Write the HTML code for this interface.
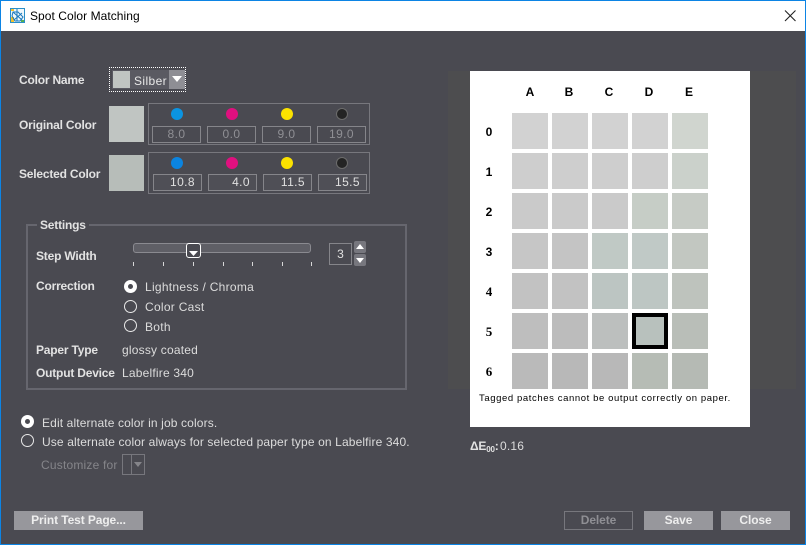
<!DOCTYPE html>
<html><head><meta charset="utf-8"><style>
html,body{margin:0;padding:0;width:806px;height:545px;overflow:hidden;background:#4a4a51}
*{box-sizing:border-box}
div,span,svg{position:absolute}
#r{left:0;top:0;width:806px;height:545px;background:#4a4a51;font:12px/14px "Liberation Sans",sans-serif;color:#dcdcdc;overflow:hidden}
.t{white-space:nowrap;letter-spacing:.2px}
.b{font-weight:bold;color:#e2e2e2;letter-spacing:-.2px;white-space:nowrap}
.f{border:1px solid #85858a;height:17px;width:49px;text-align:center;line-height:15px;color:#8f8f94;letter-spacing:.4px}
.s{border:1px solid #85858a;height:17px;width:49px;text-align:right;padding-right:6px;line-height:15px;color:#e0e0e0;background:#4f4f56;letter-spacing:.4px}
.c{width:12px;height:12px;border-radius:50%}
.g{border:1px solid #77777d}
.p{width:36px;height:36px}
.h{font-weight:bold;color:#000;white-space:nowrap;width:20px;text-align:center}
.o{width:13px;height:13px;border-radius:50%;border:1.5px solid #e8e8e8}
.o.on{background:#fff;border:none}
.o.on:after{content:"";position:absolute;left:4px;top:4px;width:5px;height:5px;border-radius:50%;background:#4a4a51}
.tk{width:1px;height:4px;background:#d8d8d8;top:262px}
.btn{height:19px;top:511px;background:#97979c;color:#eee;font-weight:bold;text-align:center;line-height:19px;white-space:nowrap;letter-spacing:-.1px}
</style></head><body><div id="r">
<div style="left:0;top:0;width:806px;height:31px;background:#fff"></div>
<div style="left:0;top:0;width:806px;height:1px;background:#0c84e4"></div>
<div style="left:0;top:0;width:1px;height:545px;background:#0c84e4"></div>
<div style="left:805px;top:0;width:1px;height:545px;background:#0c84e4"></div>
<div style="left:0;top:544px;width:806px;height:1px;background:#0c84e4"></div>
<svg style="left:10px;top:8px" width="15" height="15" viewBox="0 0 15 15"><rect x=".5" y=".5" width="14" height="14" fill="#eef7fb" stroke="#2a8fc8"/><rect x="1" y="1" width="3" height="2" fill="#f2c230"/><rect x="1" y="9" width="3" height="5" fill="#f2c230"/><rect x="11" y="12" width="3" height="2" fill="#58b050"/><path d="M3 4h5l5 5-3 4H5L2 8zM7 1v12M3 4l9 8M12 5 4 12" fill="none" stroke="#1a78bc" stroke-width="1"/></svg>
<div style="left:30px;top:9px;color:#000;font-size:12px;white-space:nowrap;letter-spacing:.05px">Spot Color Matching</div>
<svg style="left:784px;top:9px" width="13" height="13" viewBox="0 0 13 13"><path d="M1 1.500 11.500 12M11.500 1.500 1 12" stroke="#222" stroke-width="1.100" fill="none"/></svg>

<div class="b" style="left:19px;top:73px">Color Name</div>
<div class="b" style="left:19px;top:118px">Original Color</div>
<div class="b" style="left:19px;top:167px">Selected Color</div>

<div style="left:109px;top:67px;width:77px;height:25px;border:1px dotted #fff"></div>
<div style="left:112px;top:70px;width:73px;height:19px;background:#5a5a62"></div>
<div style="left:113px;top:71px;width:17px;height:17px;background:#c0c5c2"></div>
<div class="t" style="left:134px;top:74px;color:#e8e8e8;letter-spacing:.4px">Silber</div>
<div style="left:169px;top:70px;width:16px;height:19px;background:#8e8e94"></div>
<svg style="left:171px;top:76px" width="12" height="7"><path d="M1 0h10L6 6z" fill="#fff"/></svg>

<div style="left:109px;top:106px;width:35px;height:36px;background:#c0c5c2"></div>
<div class="g" style="left:148px;top:103px;width:222px;height:42px"></div>
<div class="c" style="left:171px;top:108px;background:#0b94e2"></div>
<div class="c" style="left:226px;top:108px;background:#e0107f"></div>
<div class="c" style="left:281px;top:108px;background:#fbe200"></div>
<div class="c" style="left:336px;top:108px;background:#242424;border:1px solid #6c6c6c"></div>
<div class="f" style="left:152px;top:126px">8.0</div>
<div class="f" style="left:207px;top:126px">0.0</div>
<div class="f" style="left:262px;top:126px">9.0</div>
<div class="f" style="left:317px;top:126px">19.0</div>

<div style="left:109px;top:155px;width:35px;height:36px;background:#b7bdb9"></div>
<div class="g" style="left:148px;top:152px;width:222px;height:42px"></div>
<div class="c" style="left:171px;top:157px;background:#0b84e0"></div>
<div class="c" style="left:226px;top:157px;background:#e0107f"></div>
<div class="c" style="left:281px;top:157px;background:#fbe200"></div>
<div class="c" style="left:336px;top:157px;background:#242424;border:1px solid #6c6c6c"></div>
<div class="s" style="left:153px;top:174px">10.8</div>
<div class="s" style="left:208px;top:174px">4.0</div>
<div class="s" style="left:263px;top:174px">11.5</div>
<div class="s" style="left:318px;top:174px">15.5</div>

<div style="left:26px;top:224px;width:381px;height:166px;border:2px solid #66666e"></div>
<div class="b" style="left:37px;top:218px;background:#4a4a51;padding:0 3px">Settings</div>
<div class="b" style="left:36px;top:249px">Step Width</div>
<div style="left:133px;top:243px;width:178px;height:10px;border:1px solid #8a8a90;border-radius:3px;background:#5f5f66"></div>
<div style="left:186px;top:243px;width:15px;height:15px;border:1px solid #fff;border-radius:3px;background:#4a4a51"></div>
<svg style="left:189px;top:251px" width="9" height="5"><path d="M0 0h9L4.500 5z" fill="#fff"/></svg>
<div class="tk" style="left:133px"></div><div class="tk" style="left:163px"></div><div class="tk" style="left:193px"></div><div class="tk" style="left:223px"></div><div class="tk" style="left:252px"></div><div class="tk" style="left:282px"></div><div class="tk" style="left:311px"></div>
<div style="left:329px;top:243px;width:23px;height:22px;border:1px solid #85858a;text-align:center;line-height:20px;color:#e0e0e0">3</div>
<div style="left:354px;top:241px;width:12px;height:12px;background:#77777e;border-radius:2px"></div>
<div style="left:354px;top:254px;width:12px;height:12px;background:#77777e;border-radius:2px"></div>
<svg style="left:356px;top:244px" width="8" height="5"><path d="M4 0 8 5H0z" fill="#fff"/></svg>
<svg style="left:356px;top:258px" width="8" height="5"><path d="M0 0h8L4 5z" fill="#fff"/></svg>

<div class="b" style="left:36px;top:279px">Correction</div>
<div class="o on" style="left:124px;top:280px"></div>
<div class="t" style="left:145px;top:280px;letter-spacing:.28px">Lightness / Chroma</div>
<div class="o" style="left:124px;top:300px"></div>
<div class="t" style="left:145px;top:300px;letter-spacing:.28px">Color Cast</div>
<div class="o" style="left:124px;top:319px"></div>
<div class="t" style="left:145px;top:320px;letter-spacing:.28px">Both</div>
<div class="b" style="left:36px;top:343px">Paper Type</div>
<div class="t" style="left:122px;top:343px">glossy coated</div>
<div class="b" style="left:36px;top:366px">Output Device</div>
<div class="t" style="left:122px;top:366px">Labelfire 340</div>

<div class="o on" style="left:21px;top:415px"></div>
<div class="t" style="left:42px;top:416px;letter-spacing:.13px">Edit alternate color in job colors.</div>
<div class="o" style="left:21px;top:434px"></div>
<div class="t" style="left:42px;top:435px;letter-spacing:.13px">Use alternate color always for selected paper type on Labelfire 340.</div>
<div class="t" style="left:41px;top:458px;color:#85858a">Customize for</div>
<div style="left:122px;top:454px;width:23px;height:21px;border:1px solid #77777d"></div>
<div style="left:131px;top:455px;width:1px;height:19px;background:#77777d"></div>
<svg style="left:134px;top:462px" width="8" height="5"><path d="M0 0h8L4 5z" fill="#85858a"/></svg>

<div class="btn" style="left:14px;width:129px">Print Test Page...</div>
<div class="btn" style="left:564px;width:69px;background:none;border:1px solid #77777d;line-height:17px;color:#8f8f94">Delete</div>
<div class="btn" style="left:644px;width:69px">Save</div>
<div class="btn" style="left:721px;width:69px">Close</div>

<div style="left:448px;top:71px;width:348px;height:318px;background:#4d4d4f"></div>
<div style="left:470px;top:71px;width:280px;height:356px;background:#fff"></div>
<div class="h" style="left:520px;top:85px">A</div>
<div class="h" style="left:559px;top:85px">B</div>
<div class="h" style="left:599px;top:85px">C</div>
<div class="h" style="left:639px;top:85px">D</div>
<div class="h" style="left:679px;top:85px">E</div>
<div class="h" style="left:479px;top:125px">0</div>
<div class="h" style="left:479px;top:165px">1</div>
<div class="h" style="left:479px;top:205px">2</div>
<div class="h" style="left:479px;top:245px">3</div>
<div class="h" style="left:479px;top:285px;font:bold 13px/14px 'Liberation Serif',serif">4</div>
<div class="h" style="left:479px;top:325px;font:bold 13px/14px 'Liberation Serif',serif">5</div>
<div class="h" style="left:479px;top:365px;font:bold 13px/14px 'Liberation Serif',serif">6</div>

<div class="p" style="left:512px;top:113px;background:#d2d2d2"></div><div class="p" style="left:552px;top:113px;background:#d2d2d2"></div><div class="p" style="left:592px;top:113px;background:#d2d2d2"></div><div class="p" style="left:632px;top:113px;background:#d2d2d2"></div><div class="p" style="left:672px;top:113px;background:#d0d5cf"></div>
<div class="p" style="left:512px;top:153px;background:#cecece"></div><div class="p" style="left:552px;top:153px;background:#cecece"></div><div class="p" style="left:592px;top:153px;background:#cecece"></div><div class="p" style="left:632px;top:153px;background:#cecece"></div><div class="p" style="left:672px;top:153px;background:#cbd1cb"></div>
<div class="p" style="left:512px;top:193px;background:#cacaca"></div><div class="p" style="left:552px;top:193px;background:#cacaca"></div><div class="p" style="left:592px;top:193px;background:#cacaca"></div><div class="p" style="left:632px;top:193px;background:#c6cdc6"></div><div class="p" style="left:672px;top:193px;background:#c6cbc5"></div>
<div class="p" style="left:512px;top:233px;background:#c6c6c6"></div><div class="p" style="left:552px;top:233px;background:#c4c4c4"></div><div class="p" style="left:592px;top:233px;background:#c0c9c5"></div><div class="p" style="left:632px;top:233px;background:#c0c9c6"></div><div class="p" style="left:672px;top:233px;background:#c2c7c1"></div>
<div class="p" style="left:512px;top:273px;background:#c2c2c2"></div><div class="p" style="left:552px;top:273px;background:#c2c2c2"></div><div class="p" style="left:592px;top:273px;background:#bcc5c2"></div><div class="p" style="left:632px;top:273px;background:#bdc6c3"></div><div class="p" style="left:672px;top:273px;background:#bec3bd"></div>
<div class="p" style="left:512px;top:313px;background:#bebebe"></div><div class="p" style="left:552px;top:313px;background:#bcbcbc"></div><div class="p" style="left:592px;top:313px;background:#bcbfbe"></div><div class="p" style="left:632px;top:313px;background:#b8c1bd;border:4px solid #000"></div><div class="p" style="left:672px;top:313px;background:#b9beb8"></div>
<div class="p" style="left:512px;top:353px;background:#bababa"></div><div class="p" style="left:552px;top:353px;background:#b8b8b8"></div><div class="p" style="left:592px;top:353px;background:#b8b8b8"></div><div class="p" style="left:632px;top:353px;background:#b6bcb5"></div><div class="p" style="left:672px;top:353px;background:#b5bab4"></div>
<div style="left:479px;top:392px;color:#000;font-size:9.500px;white-space:nowrap;letter-spacing:.6px">Tagged patches cannot be output correctly on paper.</div>

<div style="left:470px;top:439px;font-weight:bold;color:#e2e2e2;white-space:nowrap;letter-spacing:-.2px">ΔE<span style="position:static;font-size:8px;vertical-align:-2px">00</span>:</div>
<div class="t" style="left:500px;top:439px">0.16</div>
</div></body></html>
